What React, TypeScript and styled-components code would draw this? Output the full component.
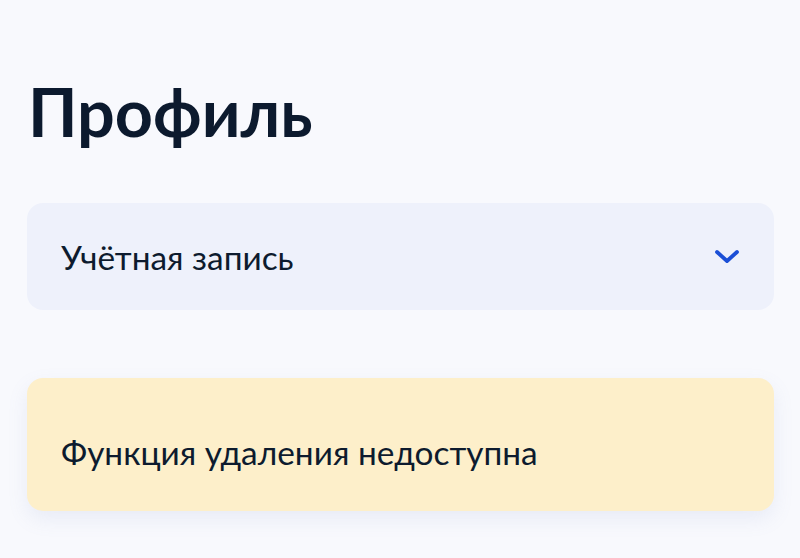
import React from "react";
import styled, { createGlobalStyle } from "styled-components";

const Global = createGlobalStyle`
  html, body { margin: 0; padding: 0; }
  body {
    background: #f8f9fd;
    font-family: Lato, "Noto Sans", sans-serif;
    color: #0d1b2e;
  }
`;

const Page = styled.div`
  width: 800px;
  height: 558px;
  box-sizing: border-box;
  padding: 69px 26px 0 27px;
  display: flex;
  flex-direction: column;
  overflow: hidden;
`;

const Title = styled.h1`
  margin: 0 0 0 1px;
  font-size: 66.5px;
  line-height: 84px;
  font-weight: 700;
  color: #0c1a2e;
  letter-spacing: 0;
`;

const Card = styled.div<{ $tone: "blue" | "yellow"; $h: number; $mt: number }>`
  margin-top: ${(p) => p.$mt}px;
  height: ${(p) => p.$h}px;
  box-sizing: border-box;
  border-radius: 16px;
  padding: 0 34px;
  display: flex;
  align-items: center;
  justify-content: space-between;
  background: ${(p) => (p.$tone === "blue" ? "#eef1fb" : "#fdefca")};
  box-shadow: ${(p) =>
    p.$tone === "yellow"
      ? "0 8px 20px rgba(120, 140, 200, 0.12)"
      : "none"};
`;

const Label = styled.span<{ $pt?: number }>`
  font-size: 33.4px;
  line-height: 40px;
  font-weight: 400;
  color: #0d1b2e;
  padding-top: ${(p) => p.$pt ?? 0}px;
`;

const Chevron = () => (
  <svg width="26" height="16" viewBox="0 0 26 16" fill="none">
    <path d="M3 3 L13 12 L23 3" stroke="#1b4fd6" strokeWidth="3.8" strokeLinecap="round" strokeLinejoin="round" />
  </svg>
);

export default function App() {
  return (
    <>
      <Global />
      <Page>
        <Title>Профиль</Title>
        <Card $tone="blue" $h={107} $mt={50}>
          <Label>Учётная запись</Label>
          <Chevron />
        </Card>
        <Card $tone="yellow" $h={133} $mt={68}>
          <Label $pt={14}>Функция удаления недоступна</Label>
        </Card>
      </Page>
    </>
  );
}
